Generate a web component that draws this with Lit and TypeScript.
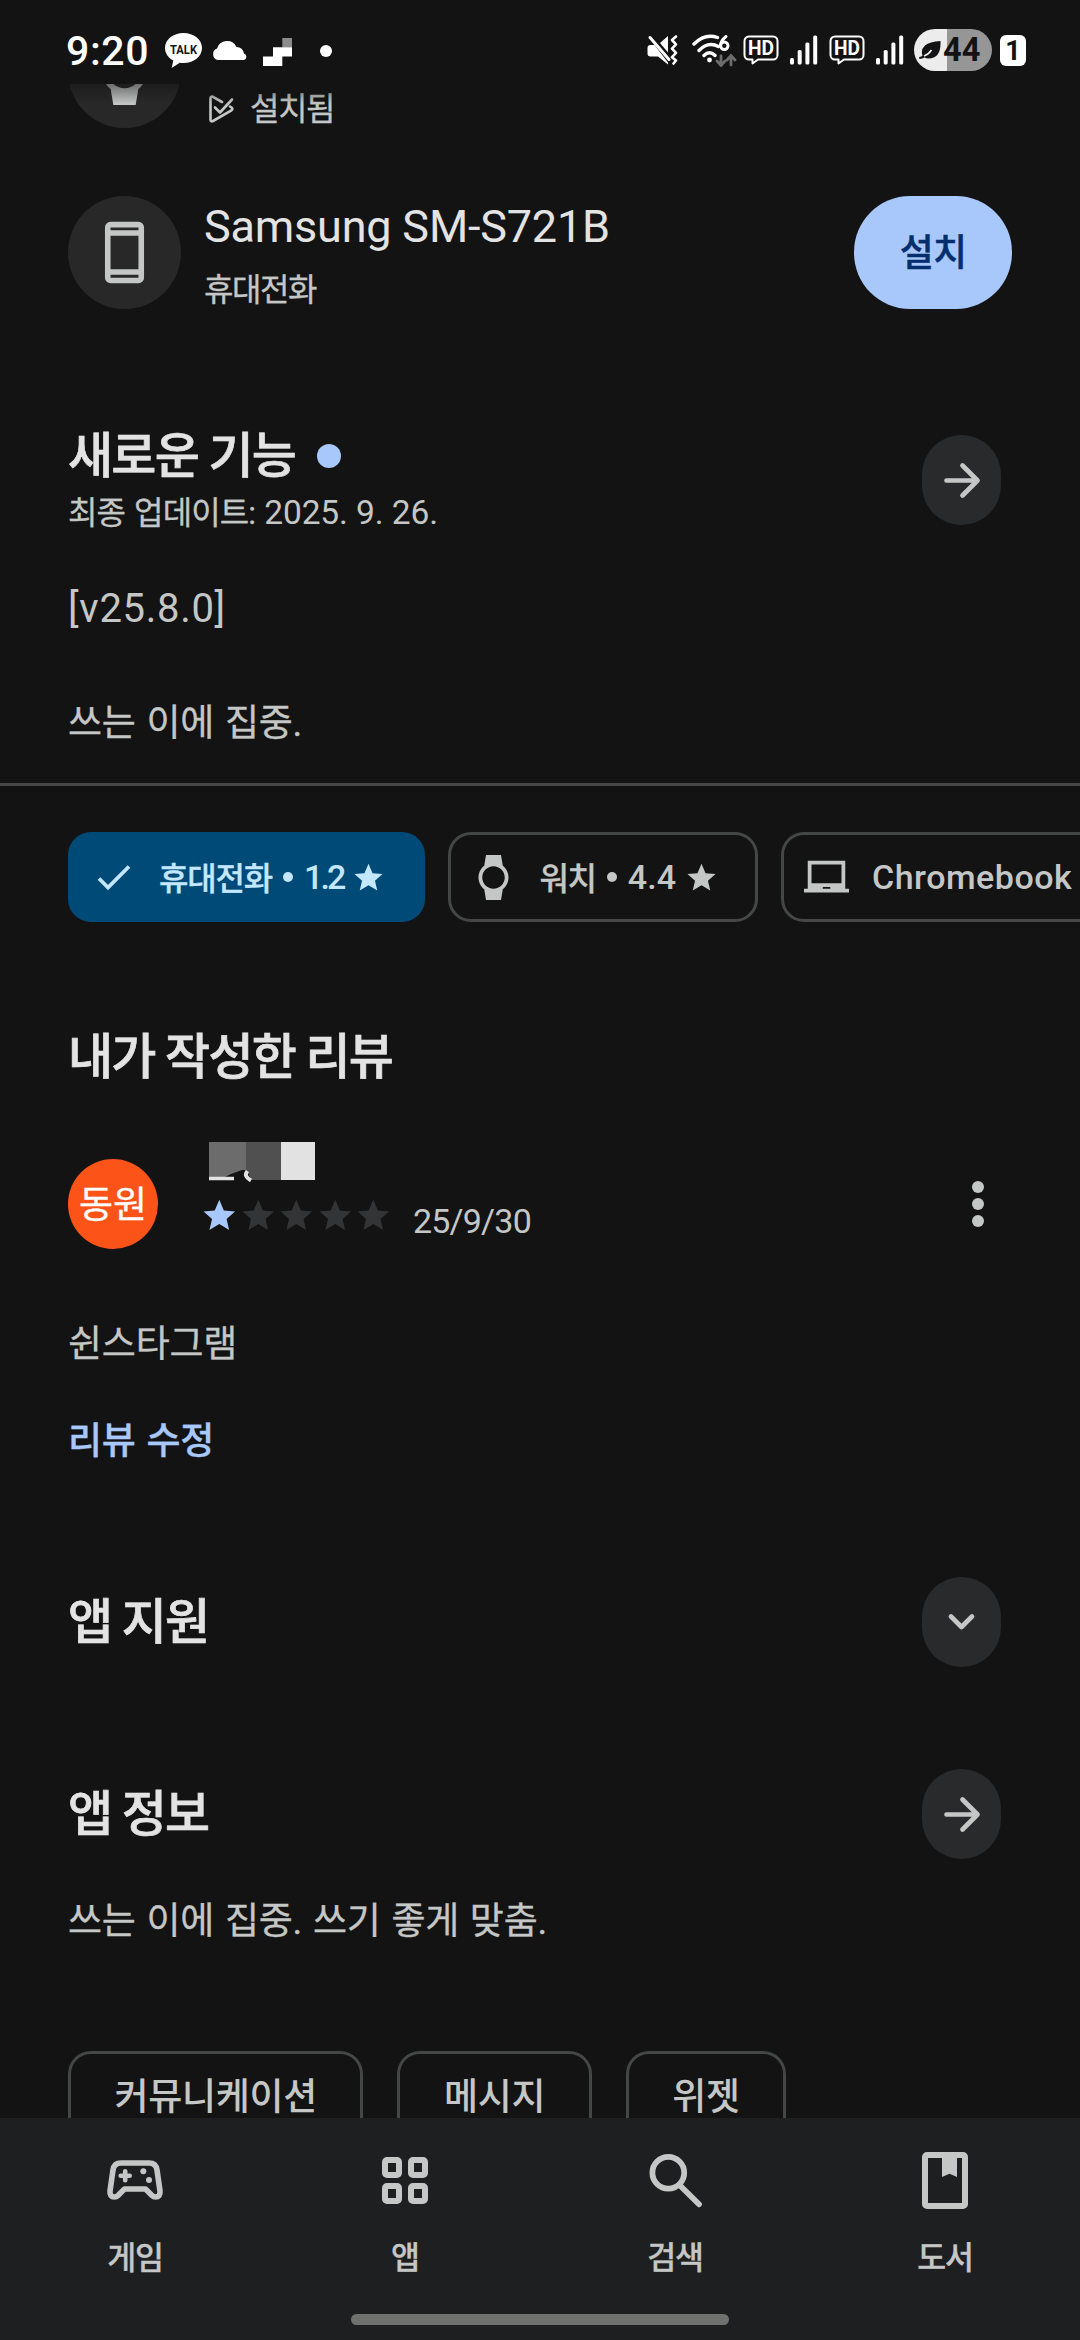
import { LitElement, html, css, svg, nothing } from "lit";
import { customElement, property } from "lit/decorators.js";

const STAR = "M12 .6l3.35 7.9 8.25.7-6.25 5.5 1.9 8.1L12 18.5l-7.25 4.3 1.9-8.1L.4 9.2l8.25-.7z";
const WATCH =
  "M20 12c0-2.54-1.19-4.81-3.04-6.27L16 0H8l-.95 5.73C5.19 7.19 4 9.45 4 12s1.19 4.81 3.05 6.27L8 24h8l.96-5.73C18.81 16.81 20 14.54 20 12zM6 12c0-3.31 2.69-6 6-6s6 2.69 6 6-2.69 6-6 6-6-2.69-6-6z";
const LAPTOP = "M22 18V3H2v15H0v2h24v-2h-2zm-8 0h-4v-1h4v1zm6-3H4V5h16v10z";

const FONT = css`Roboto, "Noto Sans CJK KR", sans-serif`;

const star = (size: number) => html`<svg width=${size} height=${size} viewBox="0 0 24 24" fill="currentColor"><path d=${STAR} /></svg>`;

@customElement("status-bar")
export class StatusBar extends LitElement {
  static styles = css`
    :host { display: block; font-family: ${FONT}; color: #fff; }
    svg { display: block; flex: none; }
    .bar { display: flex; align-items: center; justify-content: space-between; height: 84px; padding: 16px 54px 0 66px; box-sizing: border-box; }
    .side { display: flex; align-items: center; }
    .clock { font-size: 41px; font-weight: 500; line-height: 68px; width: 99px; letter-spacing: 0.600px; white-space: nowrap; margin-top: 1px; }
    .cloud { margin: 0 15px 0 10px; }
    .dot { width: 12px; height: 12px; border-radius: 50%; background: #fff; margin: 2px 0 0 28px; }
    .wifi { margin-left: 14px; }
    .hd { margin-left: 6px; }
    .signal { margin-left: 11px; }
    .second { margin-left: 11px; }
    .battery { margin-left: 10px; width: 78px; height: 42px; border-radius: 21px; background: linear-gradient(90deg, #ececec 33px, #969696 33px); display: flex; align-items: center; color: #131313; }
    .leaf { margin-left: 5px; }
    .level { font-size: 32.500px; font-weight: 700; line-height: 42px; margin-left: 2px; }
    .sim { margin-left: 8px; width: 26px; height: 31px; border-radius: 6px; background: #fff; color: #131313; font-size: 27px; font-weight: 700; line-height: 32px; text-align: center; }
    .label { font-family: Roboto, sans-serif; font-weight: 700; }
  `;

  private hd(second = false) {
    return html`<svg class="hd ${second ? "second" : ""}" width="36" height="30" viewBox="0 0 36 30">
      <path d="M6 1.500h24a4.500 4.500 0 0 1 4.500 4.500v14a4.500 4.500 0 0 1-4.500 4.500H15l-5.500 4v-4H6A4.500 4.500 0 0 1 1.500 20V6A4.500 4.500 0 0 1 6 1.500z" fill="none" stroke="#fff" stroke-width="2" stroke-linejoin="round" />
      <text class="label" x="18" y="20" font-size="20" text-anchor="middle" textLength="26" lengthAdjust="spacingAndGlyphs" fill="#fff">HD</text>
    </svg>`;
  }

  private signal() {
    return html`<svg class="signal" width="28" height="30" viewBox="0 0 28 30" fill="#fff">
      <rect x="0" y="23" width="4" height="6.500" rx="1.500" /><rect x="7.700" y="15" width="4" height="14.500" rx="1.500" />
      <rect x="15.400" y="7.500" width="4" height="22" rx="1.500" /><rect x="23.200" y="0.500" width="4" height="29" rx="1.500" />
    </svg>`;
  }

  render() {
    return html`<div class="bar">
      <div class="side">
        <div class="clock">9:20</div>
        <svg width="37" height="35" viewBox="0 0 37 35">
          <path d="M18.500 0C8.300 0 0 6.600 0 15c0 5.300 3.300 9.900 8.300 12.600L6.600 35l8.200-5.200c1.200.2 2.400.3 3.700.3 10.200 0 18.500-6.700 18.500-15.100S28.700 0 18.500 0z" fill="#fff" />
          <text class="label" x="18.500" y="20.500" font-size="13.500" text-anchor="middle" textLength="27" lengthAdjust="spacingAndGlyphs" fill="#131313">TALK</text>
        </svg>
        <svg class="cloud" width="36" height="20" viewBox="0 0 36 20"><path d="M6 20a6 6 0 0 1-1-11.500A10.500 10.500 0 0 1 24.500 7 8 8 0 0 1 32 13.500a3.400 3.400 0 0 1 0 6.500z" fill="#fff" /></svg>
        <svg width="29" height="32" viewBox="0 0 29 32">
          <path d="M19.300 4H29v9.500h-9.700z" fill="#8c8c8c" /><path d="M10 13.300h19v9.200h-9.700V32H0v-9.500h10z" fill="#fff" />
        </svg>
        <div class="dot"></div>
      </div>
      <div class="side">
        <svg width="31" height="30" viewBox="0 0 31 30" fill="none" stroke="#fff" stroke-linecap="round">
          <path d="M0.500 13q0-3 3-3h4l13.500 17.500v2L11 21.500H3.500q-3 0-3-3z" fill="#fff" stroke="none" />
          <path d="M21 1v16.500L13 8z" fill="#fff" stroke="none" />
          <path d="M3 2.500l19 22" stroke-width="3" />
          <path d="M29 1.500l-4 3.500 4 4.300-4 4.300 4 4.300-4 4.300 4 3.300-2.500 3" stroke-width="2.600" stroke-linejoin="round" />
        </svg>
        <svg class="wifi" width="45" height="34" viewBox="0 0 45 34" fill="none" stroke="#fff" stroke-width="3.400" stroke-linecap="round">
          <path d="M2 11Q13 0 25.500 4.500M7 17.500q9-9.500 19.500-4M12 22.500q5.500-5.500 11 0" />
          <circle cx="17.500" cy="27" r="2.400" fill="#fff" stroke="none" />
          <path d="M34 3.500q-5 4-5.500 9" stroke-width="3" /><circle cx="32.300" cy="12.800" r="3.700" stroke-width="3" />
          <path d="M29 23v9m-4-4l4 4.500 4-4.500M39 32v-9m-4 4l4-4.500 4 4.500" stroke="#6d6d6d" stroke-width="2.800" />
        </svg>
        ${this.hd()} ${this.signal()} ${this.hd(true)} ${this.signal()}
        <div class="battery">
          <svg class="leaf" width="22" height="20" viewBox="0 0 22 20"><path d="M21.500 1q.8 17.500-12 17.500-2.500 0-4-1Q3.500 18.800.5 19q-.8-1.500 0-2 2-.2 3-1.500Q1.500 9.500 6 5.500 10.500 1.500 21.500 1z" fill="#131313" /><path d="M5 16q4.500-1.500 7.500-6" stroke="#ececec" stroke-width="1.600" fill="none" /></svg>
          <span class="level">44</span>
        </div>
        <div class="sim">1</div>
      </div>
    </div>`;
  }
}

@customElement("round-button")
export class RoundButton extends LitElement {
  @property() kind = "arrow";
  static styles = css`
    :host { display: block; flex: none; }
    .button { display: flex; align-items: center; justify-content: center; width: 79px; height: 90px; border-radius: 40px; background: #282a2c; }
    svg { display: block; }
  `;
  render() {
    const d = this.kind === "arrow" ? "M4.500 19.500h31M20.500 4.500l15 15-15 15" : "M9 13.500l10.500 10.500L30 13.500";
    return html`<div class="button">
      <svg width="39" height="39" viewBox="0 0 39 39" fill="none" stroke="#c4c7c5" stroke-width="4.700" stroke-linecap="round" stroke-linejoin="round"><path d=${d} /></svg>
    </div>`;
  }
}

@customElement("nav-bar")
export class NavBar extends LitElement {
  static styles = css`
    :host { display: block; }
    .nav { height: 222px; background: #1e1f20; display: flex; flex-direction: column; align-items: center; font-family: ${FONT}; }
    .tabs { display: flex; align-self: stretch; height: 196px; }
    .tab { flex: 1; display: flex; flex-direction: column; align-items: center; padding-top: 28px; color: #c4c7c5; }
    svg { display: block; }
    .name { margin-top: 20px; font-size: 31.500px; font-weight: 500; line-height: 46px; letter-spacing: -1.200px; -webkit-text-stroke: 0.300px currentColor; }
    .pill { width: 378px; height: 11px; border-radius: 6px; background: #6f716f; }
  `;
  private tabs = [
    {
      name: "게임",
      icon: svg`<path d="M21 17h28q7 0 8 7l3 21q.5 6-4.500 6-2 0-3.500-1.500L45.500 43h-21L18 49.500Q16.500 51 14.500 51q-5 0-4.500-6l3-21q1-7 8-7z" stroke-width="5.600" />
        <path d="M25.200 25.200v9M20.700 29.700h9" stroke-width="4.600" /><circle cx="43.300" cy="25.300" r="3" fill="currentColor" stroke="none" /><circle cx="49" cy="34" r="3" fill="currentColor" stroke="none" />`,
    },
    {
      name: "앱",
      icon: svg`<g stroke-width="6"><rect x="15" y="14" width="14" height="15" rx="2" /><rect x="41" y="14" width="14" height="15" rx="2" /><rect x="15" y="40" width="14" height="15" rx="2" /><rect x="41" y="40" width="14" height="15" rx="2" /></g>`,
    },
    { name: "검색", icon: svg`<circle cx="28.300" cy="26.800" r="15.900" stroke-width="5.800" /><path d="M39.500 39L59 58.300" stroke-width="5.800" />` },
    {
      name: "도서",
      icon: svg`<rect x="15" y="9" width="40" height="51" rx="2" stroke-width="6" /><path d="M32 9h15v22l-7.500-3.300L32 31z" fill="currentColor" stroke="none" />`,
    },
  ];
  render() {
    return html`<div class="nav">
      <div class="tabs">
        ${this.tabs.map(
          (t) => html`<div class="tab">
            <svg width="70" height="70" viewBox="0 0 70 70" fill="none" stroke="currentColor" stroke-linecap="round" stroke-linejoin="round">${t.icon}</svg>
            <div class="name">${t.name}</div>
          </div>`
        )}
      </div>
      <div class="pill"></div>
    </div>`;
  }
}

@customElement("app-root")
export class AppRoot extends LitElement {
  static styles = css`
    :host { display: block; }
    * { box-sizing: border-box; }
    svg { display: block; flex: none; }
    .screen { width: 1080px; height: 2340px; display: flex; flex-direction: column; background: #131313; color: #c4c7c5; font-family: ${FONT}; overflow: hidden; }
    .content { flex: 1; min-height: 0; overflow: hidden; position: relative; display: flex; flex-direction: column; }
    .fade { position: absolute; top: 0; left: 0; right: 0; height: 20px; background: linear-gradient(rgba(19, 19, 19, 0.5), rgba(19, 19, 19, 0)); }
    .devices { display: flex; flex-direction: column; gap: 68px; margin-top: -69px; padding: 0 68px; }
    .device { display: flex; align-items: center; height: 113px; flex: none; }
    .disc { width: 113px; height: 113px; border-radius: 50%; background: #282828; display: flex; align-items: center; justify-content: center; }
    .info { flex: 1; height: 113px; padding-left: 23px; display: flex; flex-direction: column; }
    .model { flex: none; font-size: 45px; line-height: 62px; color: #e3e3e3; height: 62px; letter-spacing: -0.200px; }
    .type { flex: none; display: flex; align-items: center; font-size: 32px; line-height: 46px; height: 46px; margin-top: 9px; letter-spacing: -1.400px; -webkit-text-stroke: 0.300px currentColor; }
    .installed { margin: 0 16px 0 5px; }
    .install { width: 158px; height: 113px; border-radius: 56px; background: #a8c7fa; color: #062e6f; font-size: 37px; font-weight: 500; line-height: 116px; text-align: center; letter-spacing: -0.800px; -webkit-text-stroke: 0.400px currentColor; }
    .head { display: flex; flex: none; justify-content: space-between; padding: 0 79px 0 68px; }
    .news { margin-top: 117px; height: 114px; }
    .news round-button { margin-top: 9px; }
    .title { font-size: 49px; font-weight: 500; line-height: 60px; padding-top: 2px; height: 60px; flex: none; color: #e3e3e3; letter-spacing: -1.750px; display: flex; align-items: center; -webkit-text-stroke: 0.700px currentColor; }
    .mine { padding-top: 4px; }
    .fresh { width: 24px; height: 24px; border-radius: 50%; background: #a8c7fa; margin: -2px 0 0 22px; }
    .updated { font-size: 32px; line-height: 54px; letter-spacing: -0.900px; word-spacing: 2px; -webkit-text-stroke: 0.300px currentColor; }
    .num { font-size: 33.500px; letter-spacing: -0.100px; word-spacing: 0; -webkit-text-stroke: 0; }
    .body { flex: none; font-size: 37px; line-height: 60px; height: 57px; letter-spacing: -0.200px; word-spacing: 1.800px; padding: 0 68px; -webkit-text-stroke: 0.300px currentColor; }
    .version { font-size: 40px; line-height: 57px; letter-spacing: 0.700px; margin-top: 40px; -webkit-text-stroke: 0; }
    .notes { margin-top: 57px; }
    .divider { height: 3px; flex: none; background: #444746; margin-top: 32px; }
    .chips { display: flex; flex: none; gap: 23px; margin-top: 46px; padding-left: 68px; }
    .chip { flex: none; display: flex; align-items: center; height: 90px; border: 3px solid #444746; border-radius: 23px; padding: 0 39px 0 20px; font-size: 34px; font-weight: 500; letter-spacing: 0.500px; white-space: nowrap; }
    .chip.selected { background: #004a77; border-color: #004a77; color: #c2e7ff; }
    .lead { margin-right: 23px; }
    .kor { display: block; margin-top: -2px; font-size: 32px; letter-spacing: -1.200px; -webkit-text-stroke: 0.300px currentColor; }
    .bullet { width: 10px; height: 10px; border-radius: 50%; background: currentColor; margin: 0 11px; }
    .rate { margin-right: 11px; letter-spacing: 0; }
    .selected .rate { letter-spacing: -2.900px; }
    .mine { margin: 104px 0 0 68px; }
    .review { display: flex; height: 107px; flex: none; margin-top: 56px; padding: 0 96px 0 68px; }
    .avatar { width: 90px; height: 90px; margin-top: 17px; border-radius: 50%; background: #fc5319; color: #fff; font-size: 37px; line-height: 93px; text-align: center; -webkit-text-stroke: 0.300px currentColor; }
    .meta { flex: 1; padding-left: 45px; }
    .rating { display: flex; align-items: center; margin-top: 11px; height: 50px; }
    .stars { display: flex; gap: 6px; color: #333435; margin-top: -5px; }
    .on { color: #a8c7fa; }
    .date { font-size: 34px; line-height: 50px; margin: 6px 0 0 23px; letter-spacing: -0.800px; }
    .kebab { display: flex; flex-direction: column; gap: 5px; margin-top: 39px; }
    .kebab i { width: 12px; height: 12px; border-radius: 50%; background: #c4c7c5; }
    .comment { margin-top: 66px; }
    .edit { margin-top: 40px; color: #a8c7fa; font-weight: 500; }
    .support { margin-top: 108px; align-items: center; }
    .about { margin-top: 102px; align-items: center; }
    .desc { margin-top: 33px; }
    .tags { display: flex; flex: none; gap: 34px; margin-top: 102px; padding-left: 68px; }
    .tag { height: 90px; border: 3px solid #444746; border-radius: 23px; padding: 0 43.500px; font-size: 37px; font-weight: 500; line-height: 87px; letter-spacing: -0.300px; }
  `;

  private chip(icon: unknown, name: unknown, score: string, selected = false) {
    return html`<div class="chip ${selected ? "selected" : ""}">
      ${icon}<span>${name}</span>${score ? html`<span class="bullet"></span><span class="rate">${score}</span>${star(29)}` : nothing}
    </div>`;
  }

  render() {
    return html`<div class="screen">
      <status-bar></status-bar>
      <div class="content">
        <div class="devices">
          <div class="device">
            <div class="disc"><svg width="67" height="67" viewBox="0 0 24 24" fill="#c4c7c5"><path d=${WATCH} /></svg></div>
            <div class="info">
              <div class="model"></div>
              <div class="type">
                <svg class="installed" width="25" height="28" viewBox="0 0 25 28" fill="none" stroke="#c4c7c5" stroke-width="2.600" stroke-linejoin="round" stroke-linecap="round">
                  <path d="M13 7L4 1.800Q1.500.8 1.500 3.500v21q0 2.700 2.500 1.500l18-10.300q2.500-1.700.5-3.200L21 11.500" /><path d="M6 12.500l5 5L23 4.500" />
                </svg>설치됨
              </div>
            </div>
          </div>
          <div class="device">
            <div class="disc"><svg width="67" height="67" viewBox="0 0 24 24" fill="#c4c7c5"><path fill-rule="evenodd" d="M7 1h10a2 2 0 0 1 2 2v18a2 2 0 0 1-2 2H7a2 2 0 0 1-2-2V3a2 2 0 0 1 2-2zm0 2v1h10V3zm0 3v12h10V6zm0 14v1h10v-1z" /></svg></div>
            <div class="info">
              <div class="model">Samsung SM-S721B</div>
              <div class="type">휴대전화</div>
            </div>
            <div class="install">설치</div>
          </div>
        </div>

        <div class="head news">
          <div>
            <div class="title">새로운 기능<span class="fresh"></span></div>
            <div class="updated">최종 업데이트: <span class="num">2025. 9. 26.</span></div>
          </div>
          <round-button></round-button>
        </div>
        <div class="body version">[v25.8.0]</div>
        <div class="body notes">쓰는 이에 집중.</div>

        <div class="divider"></div>
        <div class="chips">
          ${this.chip(
            html`<svg class="lead" width="45" height="45" viewBox="0 0 45 45" fill="none" stroke="currentColor" stroke-width="3.800"><path d="M8 23.500l9 9L38 11.500" /></svg>`,
            html`<span class="kor">휴대전화</span>`,
            "1.2",
            true
          )}
          ${this.chip(html`<svg class="lead" width="45" height="45" viewBox="0 0 24 24" fill="currentColor"><path d=${WATCH} /></svg>`, html`<span class="kor">워치</span>`, "4.4")}
          ${this.chip(html`<svg class="lead" width="45" height="45" viewBox="0 0 24 24" fill="currentColor"><path d=${LAPTOP} /></svg>`, "Chromebook", "")}
        </div>

        <div class="title mine">내가 작성한 리뷰</div>
        <div class="review">
          <div class="avatar">동원</div>
          <div class="meta">
            <svg width="120" height="40" viewBox="0 0 120 40">
              <path d="M6 0h37v38H6z" fill="#6c6c6c" /><path d="M43 0h35v38H43z" fill="#505050" /><path d="M78 0h34v38H78z" fill="#e2e2e2" />
              <path d="M16 38l12-6 11-4 5 0 4 10z" fill="#131313" />
              <path d="M6 36.500h25" stroke="#e3e3e3" stroke-width="3.500" /><path d="M44.500 29q-4.500 5 3.500 9.500" fill="none" stroke="#e3e3e3" stroke-width="4" />
            </svg>
            <div class="rating">
              <div class="stars">${[1, 2, 3, 4, 5].map((n) => html`<span class=${n === 1 ? "on" : nothing}>${star(32.6)}</span>`)}</div>
              <div class="date">25/9/30</div>
            </div>
          </div>
          <div class="kebab"><i></i><i></i><i></i></div>
        </div>
        <div class="body comment">쉰스타그램</div>
        <div class="body edit">리뷰 수정</div>

        <div class="head support"><div class="title">앱 지원</div><round-button kind="chevron"></round-button></div>
        <div class="head about"><div class="title">앱 정보</div><round-button></round-button></div>
        <div class="body desc">쓰는 이에 집중. 쓰기 좋게 맞춤.</div>
        <div class="tags"><div class="tag">커뮤니케이션</div><div class="tag">메시지</div><div class="tag">위젯</div></div>
        <div class="fade"></div>
      </div>
      <nav-bar></nav-bar>
    </div>`;
  }
}
